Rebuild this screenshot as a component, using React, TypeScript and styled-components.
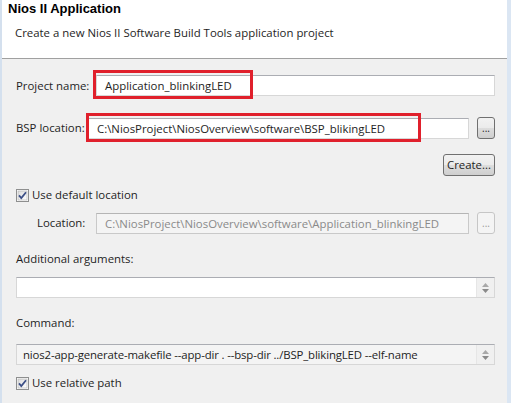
import styled, { createGlobalStyle } from 'styled-components';

const GlobalStyle = createGlobalStyle`
  html, body {
    margin: 0;
    padding: 0;
    background: #f0f0f0;
  }
  body {
    font-family: "Open Sans", "Noto Sans", sans-serif;
    font-size: 11.4px;
    color: #1e1e1e;
  }
`;

const Window = styled.div`
  width: 511px;
  height: 403px;
  box-sizing: border-box;
  display: flex;
  flex-direction: column;
  background: #f0f0f0;
  border-left: 2px solid #d4e0ee;
  border-right: 4px solid #dbe6f3;
  overflow: hidden;
`;

const Header = styled.div`
  height: 58px;
  flex-shrink: 0;
  background:
    radial-gradient(ellipse 70px 110px at 118% 55%, #d6e2f1 0%, #e8eff8 50%, rgba(255, 255, 255, 0) 100%),
    #ffffff;
  border-bottom: 1px solid #a0a0a0;
  padding: 0 6px;
  box-sizing: content-box;
`;

const Title = styled.div`
  font-family: "Liberation Sans", Arial, sans-serif;
  font-weight: bold;
  font-size: 13px;
  margin-top: 1px;
  line-height: 16px;
  color: #000;
`;

const Subtitle = styled.div`
  margin: 8px 0 0 7px;
  line-height: 16px;
  color: #1e1e1e;
`;

const Body = styled.div`
  display: flex;
  flex-direction: column;
  padding: 0 12px 0 14px;
`;

const Row = styled.div<{ $top: number; $indent?: number }>`
  display: flex;
  align-items: center;
  margin-top: ${(p) => p.$top}px;
  padding-left: ${(p) => p.$indent ?? 0}px;
`;

const Label = styled.label<{ $width?: number }>`
  flex: 0 0 ${(p) => (p.$width ? `${p.$width}px` : 'auto')};
  white-space: nowrap;
  line-height: 16px;
`;

const FieldWrap = styled.div`
  position: relative;
  flex: 1;
  display: flex;
`;

const Field = styled.div<{ $disabled?: boolean }>`
  flex: 1;
  height: 21px;
  box-sizing: border-box;
  border: 1px solid ${(p) => (p.$disabled ? '#c9c9c9' : '#d7d7d7')};
  border-top-color: ${(p) => (p.$disabled ? '#b5b5b5' : '#abadb3')};
  background: ${(p) => (p.$disabled ? '#f4f4f4' : '#ffffff')};
  color: ${(p) => (p.$disabled ? '#8a8a8a' : '#1e1e1e')};
  padding: 0 0 0 8px;
  line-height: 19px;
  white-space: nowrap;
  overflow: hidden;
`;

const Highlight = styled.div<{ $left: number; $width: number }>`
  position: absolute;
  left: ${(p) => p.$left}px;
  top: -5px;
  width: ${(p) => p.$width}px;
  height: 29px;
  box-sizing: border-box;
  border: 3px solid #e0202c;
  pointer-events: none;
`;

const DotsButton = styled.button<{ $disabled?: boolean }>`
  width: 18px;
  height: 22px;
  margin-left: 8px;
  padding: 0;
  box-sizing: border-box;
  border: 1px solid ${(p) => (p.$disabled ? '#c6c6c6' : '#707070')};
  border-radius: 3px;
  background: ${(p) =>
    p.$disabled ? '#f4f4f4' : 'linear-gradient(#f2f2f2 0%, #ebebeb 50%, #dddddd 51%, #cfcfcf 100%)'};
  color: ${(p) => (p.$disabled ? '#9a9a9a' : '#1e1e1e')};
  font: inherit;
  font-size: 10px;
  line-height: 20px;
`;

const RightAlign = styled.div`
  display: flex;
  justify-content: flex-end;
  margin-top: 15px;
`;

const PushButton = styled.button`
  width: 52px;
  height: 22px;
  padding: 0;
  box-sizing: border-box;
  border: 1px solid #707070;
  border-radius: 3px;
  background: linear-gradient(#f2f2f2 0%, #ebebeb 50%, #dddddd 51%, #cfcfcf 100%);
  font: inherit;
  color: #1e1e1e;
  line-height: 20px;
`;

const CheckRow = styled.div<{ $top: number }>`
  display: flex;
  align-items: center;
  gap: 3px;
  margin-top: ${(p) => p.$top}px;
  line-height: 16px;
`;

const SectionLabel = styled.div<{ $top: number }>`
  margin-top: ${(p) => p.$top}px;
  line-height: 16px;
`;

const TextArea = styled.div<{ $grey?: boolean; $top: number }>`
  display: flex;
  margin-top: ${(p) => p.$top}px;
  height: 21px;
  box-sizing: border-box;
  border: 1px solid #d7d7d7;
  border-top-color: #abadb3;
  background: ${(p) => (p.$grey ? '#f4f4f4' : '#ffffff')};
`;

const AreaText = styled.div`
  flex: 1;
  padding-left: 6px;
  line-height: 19px;
  letter-spacing: -0.15px;
  white-space: nowrap;
  overflow: hidden;
  color: #1e1e1e;
`;

const Spinner = styled.div`
  width: 17px;
  display: flex;
  flex-direction: column;
  align-items: center;
  justify-content: center;
  gap: 2px;
  background: #f0f0f0;
  border-left: 1px solid #e6e6e6;
`;

const Arrow = ({ down }: { down?: boolean }) => (
  <svg width="7" height="4" viewBox="0 0 7 4">
    <path d={down ? 'M0 0 H7 L3.5 4 Z' : 'M3.5 0 L7 4 H0 Z'} fill={down ? '#8a8a8a' : '#a8a8a8'} />
  </svg>
);

const CheckBox = () => (
  <svg width="13" height="13" viewBox="0 0 13 13">
    <defs>
      <linearGradient id="cbg" x1="0" y1="0" x2="1" y2="1">
        <stop offset="0" stopColor="#dcdcdc" />
        <stop offset="1" stopColor="#ffffff" />
      </linearGradient>
    </defs>
    <rect x="0.5" y="0.5" width="12" height="12" fill="#fff" stroke="#8e8f8f" />
    <rect x="2" y="2" width="9" height="9" fill="url(#cbg)" stroke="#b0b0b0" strokeWidth="0.6" />
    <path d="M3 6.3 L5.3 9 L10 3.3" fill="none" stroke="#3c4f86" strokeWidth="1.8" />
  </svg>
);

export default function App() {
  return (
    <>
      <GlobalStyle />
      <Window>
        <Header>
          <Title>Nios II Application</Title>
          <Subtitle>Create a new Nios II Software Build Tools application project</Subtitle>
        </Header>
        <Body>
          <Row $top={16}>
            <Label $width={80}>Project name:</Label>
            <FieldWrap>
              <Field>Application_blinkingLED</Field>
              <Highlight $left={-3} $width={160} />
            </FieldWrap>
          </Row>
          <Row $top={21}>
            <Label $width={72}>BSP location:</Label>
            <FieldWrap>
              <Field>C:\NiosProject\NiosOverview\software\BSP_blikingLED</Field>
              <Highlight $left={-2} $width={335} />
            </FieldWrap>
            <DotsButton>...</DotsButton>
          </Row>
          <RightAlign>
            <PushButton>Create...</PushButton>
          </RightAlign>
          <CheckRow $top={11}>
            <CheckBox />
            <span>Use default location</span>
          </CheckRow>
          <Row $top={9} $indent={21}>
            <Label $width={59}>Location:</Label>
            <FieldWrap>
              <Field $disabled>C:\NiosProject\NiosOverview\software\Application_blinkingLED</Field>
            </FieldWrap>
            <DotsButton $disabled>...</DotsButton>
          </Row>
          <SectionLabel $top={17}>Additional arguments:</SectionLabel>
          <TextArea $top={10}>
            <AreaText />
            <Spinner>
              <Arrow />
              <Arrow down />
            </Spinner>
          </TextArea>
          <SectionLabel $top={17}>Command:</SectionLabel>
          <TextArea $grey $top={13}>
            <AreaText>nios2-app-generate-makefile --app-dir . --bsp-dir ../BSP_blikingLED --elf-name</AreaText>
            <Spinner>
              <Arrow />
              <Arrow down />
            </Spinner>
          </TextArea>
          <CheckRow $top={10}>
            <CheckBox />
            <span>Use relative path</span>
          </CheckRow>
        </Body>
      </Window>
    </>
  );
}
